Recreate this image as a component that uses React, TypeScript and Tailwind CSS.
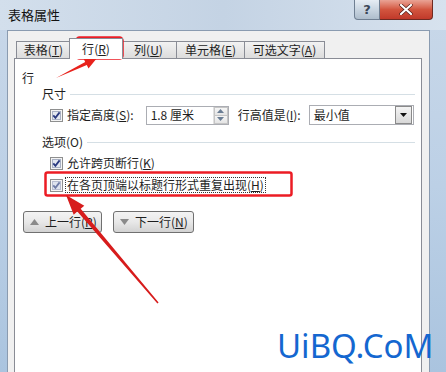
import React from 'react';

const font = { fontFamily: '"Noto Sans CJK SC", "Noto Sans", sans-serif' };

const CheckBox: React.FC<{ light?: boolean }> = ({ light }) => (
  <svg width="13" height="13" viewBox="0 0 13 13" className="shrink-0">
    <rect x="0.5" y="0.5" width="12" height="12" fill="#f4f4f4" stroke="#8e8f8f" />
    <rect x="2.5" y="2.5" width="8" height="8" fill={light ? '#dfe3ee' : '#e4e8f0'} stroke={light ? '#b8bdd0' : '#a9b1c4'} />
    <path d="M3.3 6.4 L5.4 8.8 L9.6 3.4" fill="none" stroke={light ? '#6f7ba6' : '#2a3a80'} strokeWidth="1.8" />
  </svg>
);

const Tab: React.FC<{ label: string; k: string; active?: boolean; w: string }> = ({ label, k, active, w }) => (
  <div
    className={`${w} flex items-center justify-center border border-[#898c95] border-b-0 text-[12px] text-[#1e1e1e] ${
      active ? 'h-[21px] -mx-[2px] bg-white relative z-10 -mb-px' : 'h-[17px] bg-gradient-to-b from-[#f2f2f2] to-[#dcdcdc] -ml-px first:ml-0'
    }`}
  >
    {label}(<u>{k}</u>)
  </div>
);

const GroupTitle: React.FC<{ text: string }> = ({ text }) => (
  <div className="flex items-center h-[16px] ml-[27px] mr-[6px]">
    <span className="text-[12px] text-[#1e1e1e] pr-[4px]">{text}</span>
    <div className="flex-1 h-px bg-[#d5dfe5]" />
  </div>
);

const WinButton: React.FC<{ up?: boolean; label: string; k: string; w: string }> = ({ up, label, k, w }) => (
  <div
    className={`${w} h-[22px] flex items-center pl-[6px] gap-[6px] rounded-[3px] border border-[#707070] bg-gradient-to-b from-[#f3f3f3] via-[#e8e8e8] to-[#d2d2d2] text-[12px] text-[#1e1e1e]`}
  >
    <svg width="9" height="6" viewBox="0 0 9 6">
      {up ? <path d="M0 6 L4.5 0 L9 6 Z" fill="#8a8a8a" /> : <path d="M0 0 L4.5 6 L9 0 Z" fill="#8a8a8a" />}
    </svg>
    <span>
      {label}(<u>{k}</u>)
    </span>
  </div>
);

export default function App() {
  return (
    <div className="relative w-[446px] h-[372px] overflow-hidden bg-gradient-to-b from-[#c9d8e9] via-[#bcd0e6] to-[#aac4df]" style={font}>
      {/* title bar */}
      <div className="h-[30px] flex items-start bg-gradient-to-r from-[#d3dfec] via-[#c4d3e4] to-[#d7e2ee]">
        <span className="ml-[8px] mt-[6px] text-[13px] text-[#111] leading-[18px]">表格属性</span>
        <div className="ml-auto mr-[13px] flex">
          <div className="w-[26px] h-[20px] rounded-bl-[4px] border border-t-0 border-[#6f7f92] bg-gradient-to-b from-[#e6edf4] via-[#c9d5e1] to-[#aebdcc] flex items-center justify-center text-[13px] font-bold text-[#3b4656]" style={{ fontFamily: '"DejaVu Sans", sans-serif' }}>
            ?
          </div>
          <div className="w-[53px] h-[20px] rounded-br-[4px] border border-t-0 border-l-0 border-[#6e2a22] bg-gradient-to-b from-[#e9a395] via-[#d2553f] to-[#c0392a] flex items-center justify-center">
            <svg width="14" height="11" viewBox="0 0 14 11">
              <path d="M2 1 L12 10 M12 1 L2 10" stroke="#4a1a14" strokeWidth="3.4" strokeLinecap="round" />
              <path d="M2 1 L12 10 M12 1 L2 10" stroke="#ffffff" strokeWidth="2.2" strokeLinecap="round" />
            </svg>
          </div>
        </div>
      </div>

      {/* client area */}
      <div className="ml-[7px] w-[423px] h-[342px] bg-[#f0f0f0] border border-b-0 border-[#8a9bb0] pl-[6px] pt-[9px]">
        <div className="flex items-end h-[18px] pl-[2px]">
          <Tab label="表格" k="T" w="w-[55px]" />
          <Tab label="行" k="R" w="w-[54px]" active />
          <Tab label="列" k="U" w="w-[57px]" />
          <Tab label="单元格" k="E" w="w-[69px]" />
          <Tab label="可选文字" k="A" w="w-[81px]" />
        </div>

        <div className="w-[408px] h-[320px] bg-white border border-[#898c95] text-[12px] text-[#1e1e1e]">
          <div className="h-[16px] mt-[11px] ml-[7px] leading-[16px]">行</div>

          <GroupTitle text="尺寸" />

          <div className="flex items-center h-[20px] mt-[3px] ml-[35px]">
            <CheckBox />
            <span className="ml-[4px]">
              指定高度(<u>S</u>):
            </span>
            <div className="ml-[12px] w-[83px] h-[19px] border border-[#abadb3] flex items-center">
              <span className="pl-[4px] flex-1">1.8 厘米</span>
              <div className="w-[15px] h-full flex flex-col border-l border-[#e0e0e0]">
                <div className="flex-1 flex items-center justify-center bg-gradient-to-b from-[#f6f6f6] to-[#e4e4e4] border border-[#c5c5c5]">
                  <svg width="7" height="4" viewBox="0 0 7 4"><path d="M0 4 L3.5 0 L7 4 Z" fill="#6a7d94" /></svg>
                </div>
                <div className="flex-1 flex items-center justify-center bg-gradient-to-b from-[#f6f6f6] to-[#e4e4e4] border border-t-0 border-[#c5c5c5]">
                  <svg width="7" height="4" viewBox="0 0 7 4"><path d="M0 0 L3.5 4 L7 0 Z" fill="#6a7d94" /></svg>
                </div>
              </div>
            </div>
            <span className="ml-[9px]">
              行高值是(<u>I</u>):
            </span>
            <div className="ml-[8px] w-[105px] h-[20px] border border-[#abadb3] flex items-center">
              <span className="pl-[4px] flex-1">最小值</span>
              <div className="w-[17px] h-[18px] mr-[1px] border border-[#8a8a8a] bg-gradient-to-b from-[#f4f4f4] to-[#d8d8d8] flex items-center justify-center">
                <svg width="7" height="4" viewBox="0 0 7 4"><path d="M0 0 L3.5 4 L7 0 Z" fill="#111" /></svg>
              </div>
            </div>
          </div>

          <div className="mt-[9px]">
            <GroupTitle text="选项(O)" />
          </div>

          <div className="flex items-center h-[16px] mt-[5px] ml-[35px]">
            <CheckBox />
            <span className="ml-[4px]">
              允许跨页断行(<u>K</u>)
            </span>
          </div>

          <div className="flex items-center h-[16px] mt-[6px] ml-[35px]">
            <CheckBox light />
            <span className="ml-[2px] px-[1px] border border-dotted border-[#333] leading-[14px]">
              在各页顶端以标题行形式重复出现(<u>H</u>)
            </span>
          </div>

          <div className="flex mt-[18px] ml-[8px] gap-[11px]">
            <WinButton up label="上一行" k="P" w="w-[79px]" />
            <WinButton label="下一行" k="N" w="w-[81px]" />
          </div>
        </div>
      </div>

      {/* annotations */}
      <svg className="absolute inset-0 pointer-events-none" width="446" height="372" viewBox="0 0 446 372">
        <rect x="76.5" y="37.5" width="46" height="21" rx="3" fill="none" stroke="#ec1c24" strokeWidth="2.5" />
        <rect x="45.5" y="172.5" width="246" height="23" rx="2" fill="none" stroke="#ec1c24" strokeWidth="2.5" />
        <polygon points="56,78 86.8,65.1 88.5,68.4 97,58 83.5,58.6 85.2,61.9" fill="#e8221c" />
        <polygon points="66,195 84.3,205.7 80.7,208.8 158.6,302.6 157.4,303.4 77.3,211.6 73.7,214.7" fill="#d71c1c" />
      </svg>

      <div className="absolute left-[277px] top-[326px] text-[33px] leading-[40px] text-[#1467d0]" style={{ fontFamily: '"Noto Sans", "Open Sans", sans-serif' }}>
        UiBQ.CoM
      </div>
    </div>
  );
}
